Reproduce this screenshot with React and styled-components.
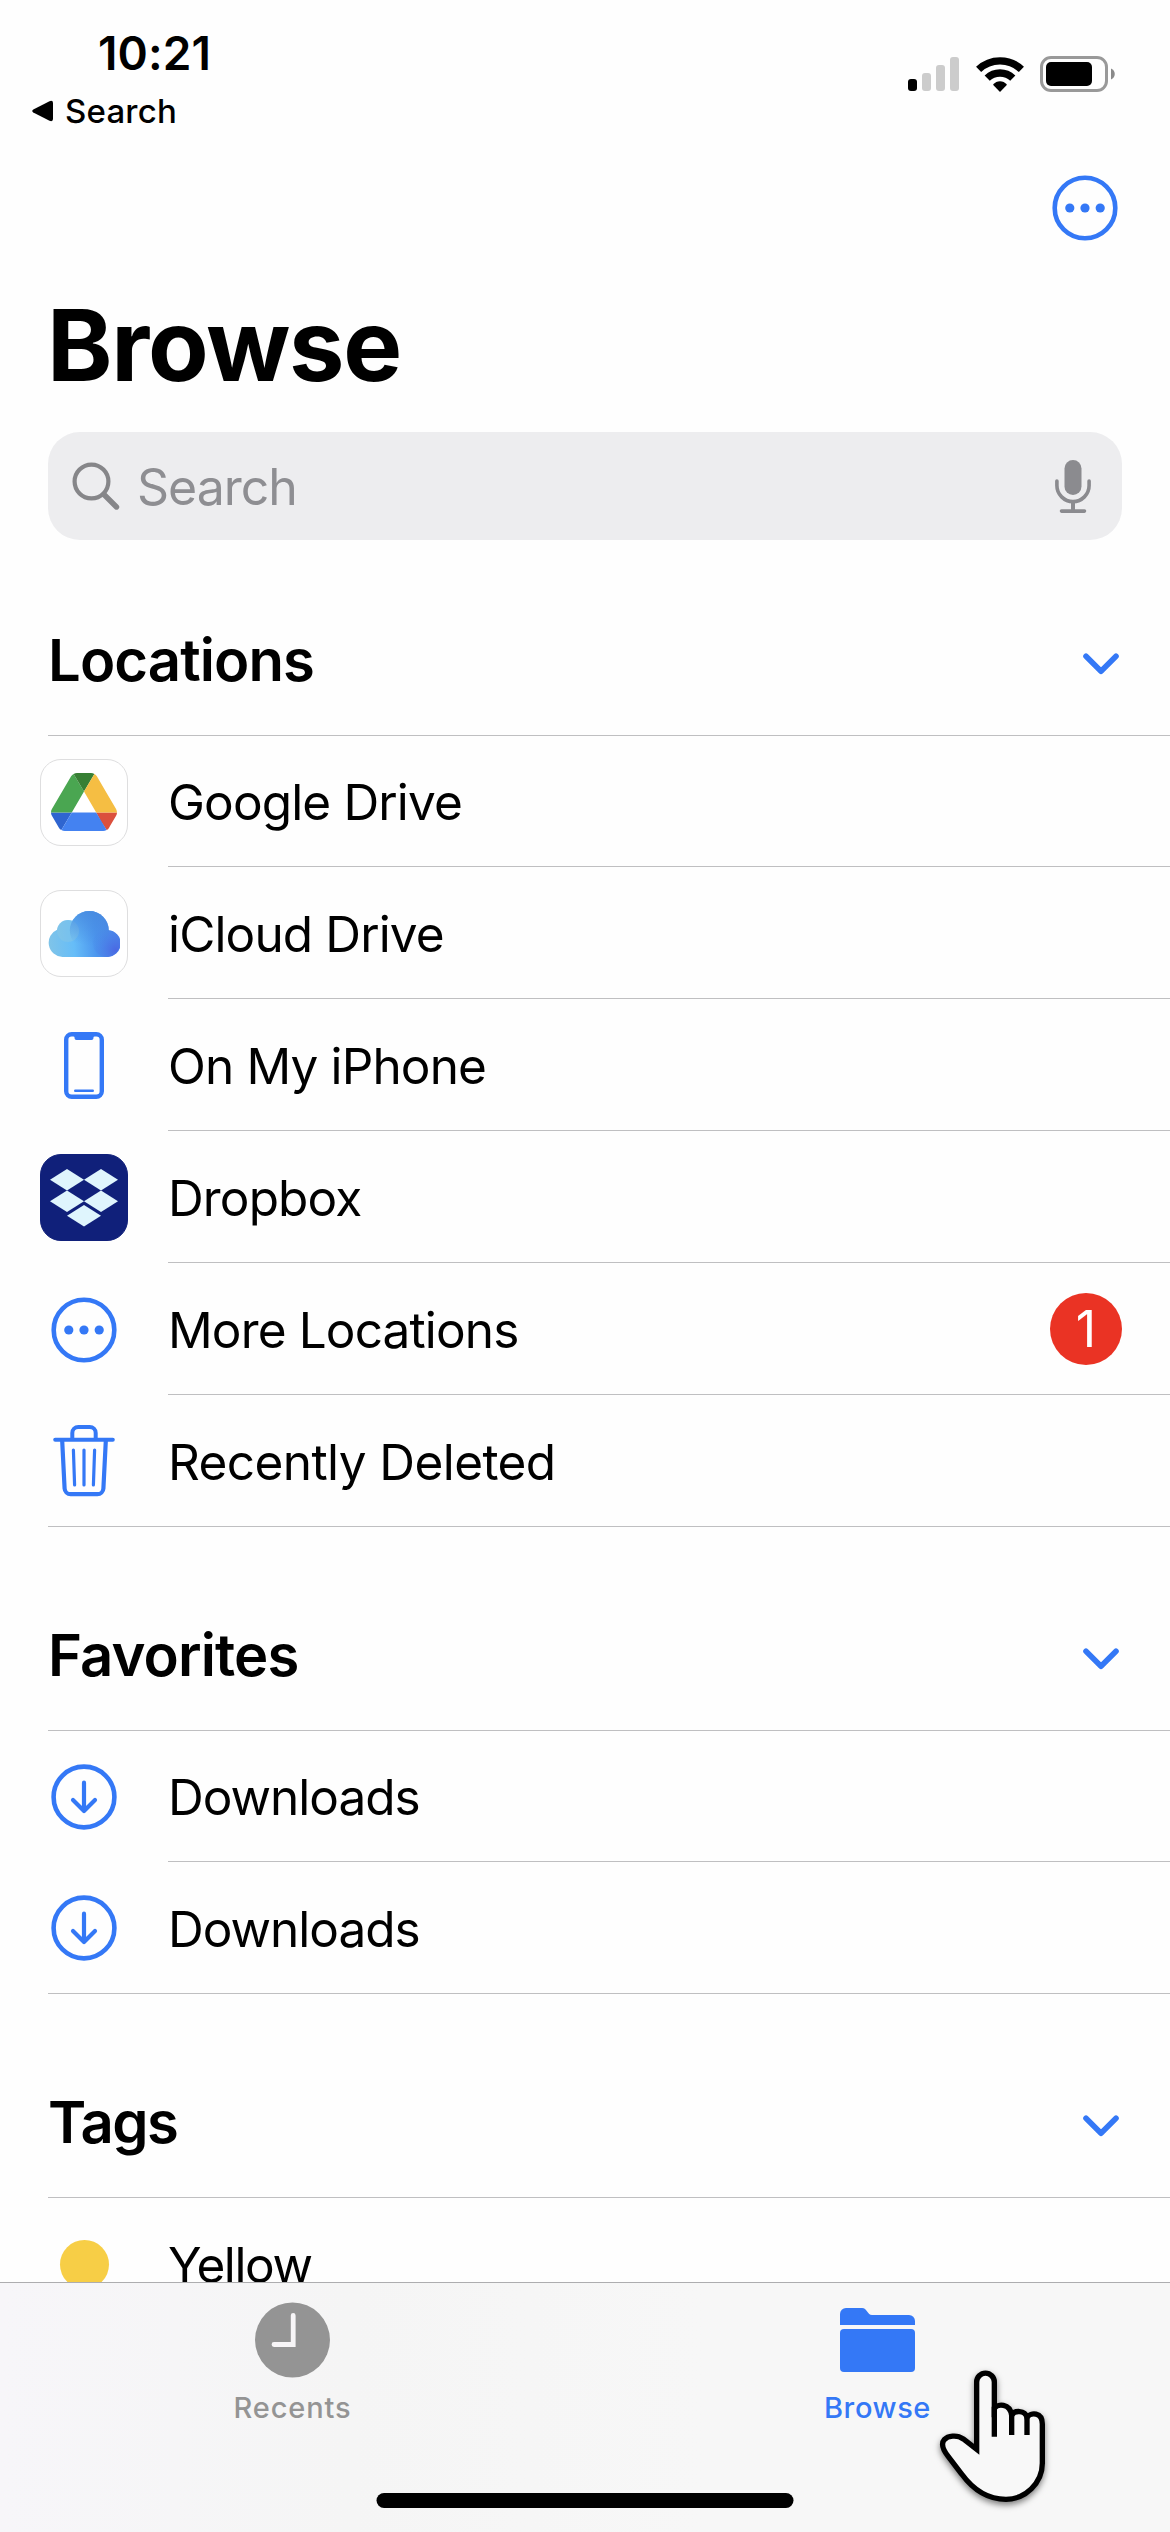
import React from "react";
import styled, { createGlobalStyle } from "styled-components";

const BLUE = "#3478f6";
const LINE = "#bfbfc1";

const GlobalStyle = createGlobalStyle`
	*, *::before, *::after {
		box-sizing: border-box;
	}
	body {
		margin: 0;
		background: #fff;
		color: #000;
		font-family: Inter, "Liberation Sans", sans-serif;
	}
	h1, h2, p, ul {
		margin: 0;
		padding: 0;
	}
	svg {
		display: block;
		flex-shrink: 0;
	}
`;

/* icons */

const SignalIcon = () => (
	<svg width="52" height="36" viewBox="0 0 52 36">
		<rect x="0" y="23" width="9" height="12" rx="3" fill="#000" />
		<rect x="14" y="17" width="9" height="18" rx="3" fill="#ccc" />
		<rect x="28" y="9" width="9" height="26" rx="3" fill="#ccc" />
		<rect x="42" y="1" width="9" height="34" rx="3" fill="#ccc" />
	</svg>
);

const WifiIcon = () => (
	<svg width="48" height="36" viewBox="0 0 48 36">
		<g fill="none" stroke="#000" strokeWidth="7.4">
			<path d="M2.6 13.4a31 31 0 0 1 42.8 0" />
			<path d="M11.2 22.2a18.4 18.4 0 0 1 25.6 0" />
		</g>
		<path d="M24 36l-7-7.2c3.9-4.6 10.1-4.6 14 0z" />
	</svg>
);

const BatteryIcon = () => (
	<svg width="75" height="36" viewBox="0 0 75 36">
		<rect x="1.5" y="1.5" width="65" height="33" rx="9.5" fill="none" stroke="#999" strokeWidth="3" />
		<rect x="6" y="6" width="46" height="24" rx="5" />
		<path d="M71 12.5c5 2 5 9 0 11z" fill="#8a8a8a" />
	</svg>
);

const MoreIcon = () => (
	<svg width="66" height="66" viewBox="0 0 66 66">
		<circle cx="33" cy="33" r="30.3" fill="none" stroke={BLUE} strokeWidth="4.6" />
		<g fill={BLUE}>
			<circle cx="17.8" cy="33" r="4.6" />
			<circle cx="33" cy="33" r="4.6" />
			<circle cx="48.2" cy="33" r="4.6" />
		</g>
	</svg>
);

const SearchIcon = () => (
	<svg width="48" height="48" viewBox="0 0 48 48" fill="none" stroke="#868689">
		<circle cx="19.5" cy="19.5" r="16.9" strokeWidth="4.2" />
		<path d="M32 32.5L44.5 45" strokeWidth="5.4" strokeLinecap="round" />
	</svg>
);

const MicIcon = () => (
	<svg width="36" height="53" viewBox="0 0 36 53" fill="none" stroke="#8b8b8f" strokeWidth="3.6">
		<rect x="9.5" y="0" width="17" height="35" rx="8.5" fill="#8b8b8f" stroke="none" />
		<path d="M1.9 21v4.5a16.1 16.1 0 0 0 32.2 0V21M6.5 51.1h23" strokeLinecap="round" />
		<path d="M18 42v9" strokeWidth="4" />
	</svg>
);

const ChevronIcon = () => (
	<svg width="36" height="22" viewBox="0 0 36 22">
		<path d="M3 3.2l15 15 15-15" fill="none" stroke={BLUE} strokeWidth="5.6" strokeLinecap="round" strokeLinejoin="round" />
	</svg>
);

const GoogleDriveIcon = () => (
	<svg width="66" height="58" viewBox="0 0 87.3 78" preserveAspectRatio="none">
		<path fill="#2f65d0" d="m6.6 66.85 3.85 6.65c.8 1.4 1.95 2.5 3.3 3.3l13.75-23.8h-27.5c0 1.55.4 3.1 1.2 4.5z" />
		<path fill="#4aa651" d="m43.65 25-13.75-23.8c-1.35.8-2.5 1.9-3.3 3.3l-25.4 44a9.06 9.06 0 0 0-1.2 4.5h27.5z" />
		<path fill="#db503d" d="m73.55 76.8c1.35-.8 2.5-1.9 3.3-3.3l1.6-2.75 7.65-13.25c.8-1.4 1.2-2.95 1.2-4.5h-27.5l5.85 11.5z" />
		<path fill="#377f34" d="m43.65 25 13.75-23.8c-1.35-.8-2.9-1.2-4.5-1.2h-18.5c-1.6 0-3.15.45-4.5 1.2z" />
		<path fill="#4482f1" d="m59.8 53h-32.3l-13.75 23.8c1.35.8 2.9 1.2 4.5 1.2h50.8c1.6 0 3.15-.45 4.5-1.2z" />
		<path fill="#f5be43" d="m73.4 26.5-12.7-22c-.8-1.4-1.95-2.5-3.3-3.3l-13.75 23.8 16.15 28h27.45c0-1.55-.4-3.1-1.2-4.5z" />
	</svg>
);

const ICloudIcon = () => (
	<svg width="72" height="46" viewBox="0 0 72 46">
		<defs>
			<linearGradient id="cloud" gradientUnits="userSpaceOnUse" x1="0" y1="30" x2="70" y2="24">
				<stop offset="0" stopColor="#80c4e8" />
				<stop offset="0.36" stopColor="#66bdf8" />
				<stop offset="0.68" stopColor="#4b95ee" />
				<stop offset="1" stopColor="#4a80e8" />
			</linearGradient>
			<linearGradient id="cloudShade" gradientUnits="userSpaceOnUse" x1="44" y1="0" x2="38" y2="34">
				<stop offset="0" stopColor="#488be0" stopOpacity="0.9" />
				<stop offset="1" stopColor="#488be0" stopOpacity="0" />
			</linearGradient>
			<radialGradient id="cloudEnd" cx="0.85" cy="0.75" r="0.85">
				<stop offset="0" stopColor="#4a68e3" />
				<stop offset="1" stopColor="#4a88e8" stopOpacity="0.2" />
			</radialGradient>
		</defs>
		<g fill="url(#cloud)">
			<circle cx="20" cy="20" r="11" />
			<circle cx="41.300" cy="19.500" r="19.500" />
			<path d="M14.500 46a14.300 14.300 0 0 1-5-27.500L60 19a13.500 13.500 0 0 1-1.500 27z" />
		</g>
		<circle cx="20" cy="20" r="11" fill="#8fc8e0" opacity="0.4" />
		<circle cx="41.300" cy="19.500" r="19.500" fill="url(#cloudShade)" />
		<circle cx="58.500" cy="32.500" r="13.500" fill="url(#cloudEnd)" />
	</svg>
);

const DropboxIcon = () => (
	<svg width="68" height="58" viewBox="0 0 68 58" fill="#dff5fd">
		<path d="M17 0l17 10.700-17 10.700L0 10.700z" />
		<path d="M51 0l17 10.700-17 10.700L34 10.700z" />
		<path d="M17 21.600l17 10.700-17 10.700L0 32.300z" />
		<path d="M51 21.600l17 10.700-17 10.700L34 32.300z" />
		<path d="M34 36l17 10.700-17 10.700L17 46.700z" />
	</svg>
);

const PhoneIcon = () => (
	<svg width="40" height="67" viewBox="0 0 40 67">
		<rect x="2.200" y="2.200" width="35.600" height="62.600" rx="5.500" fill="none" stroke={BLUE} strokeWidth="4.400" />
		<path d="M8.500 3h23l-2 2v1a2 2 0 0 1-2 2h-15a2 2 0 0 1-2-2V5z" fill={BLUE} />
		<path d="M11.300 58.800h17.400" stroke={BLUE} strokeWidth="2.600" strokeLinecap="round" />
	</svg>
);

const TrashIcon = () => (
	<svg width="62" height="72" viewBox="0 0 62 72" fill="none" stroke={BLUE} strokeLinecap="round" strokeLinejoin="round">
		<path d="M19.300 14V8a6 6 0 0 1 6-6h11.400a6 6 0 0 1 6 6v6" strokeWidth="4" />
		<path d="M2.200 14.700h57.600" strokeWidth="4" />
		<path d="M9.200 16l2.400 47.500a6 6 0 0 0 6 5.700h26.800a6 6 0 0 0 6-5.700L52.800 16" strokeWidth="4.200" />
		<path d="M20.400 25l1.200 35M31 25v35M41.600 25l-1.200 35" strokeWidth="3.200" />
	</svg>
);

const DownloadIcon = () => (
	<svg width="66" height="66" viewBox="0 0 66 66" fill="none" stroke={BLUE} strokeWidth="4.600">
		<circle cx="33" cy="33" r="30.400" />
		<path d="M33 18.700v28M22 36l11 11 11-11" strokeWidth="4.200" strokeLinecap="round" strokeLinejoin="round" />
	</svg>
);

const RecentsIcon = () => (
	<svg width="75" height="76" viewBox="0 0 75 76">
		<circle cx="37.500" cy="38" r="37.500" fill="#949494" />
		<path d="M38.200 13.500V42.500H19" fill="none" stroke="#f7f5f7" strokeWidth="4.800" strokeLinecap="round" />
	</svg>
);

const FolderIcon = () => (
	<svg width="75" height="76" viewBox="0 0 75 76" fill={BLUE}>
		<path d="M0 23v-11a6 6 0 0 1 6-6h16c5 0 5.500 7 10 7h37a6 6 0 0 1 6 6v4z" />
		<rect x="0" y="27" width="75" height="43" rx="4" />
	</svg>
);

const HandCursor = () => (
	<svg width="114" height="146" viewBox="468 318 342 438">
		<path
			d="M590 568V366A26.500 26.500 0 0 1 643 366V445C652 431 690 428 695 466C703 450 735 450 741 472C752 456 787 456 787 492V610C787 670 735 718 678 718C625 718 580 690 545 642L505 590C488 568 483 550 493 539C503 528 530 523 550 537Z"
			fill="#f8f8f8"
			stroke="#000"
			strokeWidth="16"
		/>
		<path d="M643 440V530M695 460V525M741 465V525" stroke="#000" strokeWidth="16" />
	</svg>
);

/* data */

const locations = [
	{ name: "Google Drive", icon: <GoogleDriveIcon />, tile: "#fff" },
	{ name: "iCloud Drive", icon: <ICloudIcon />, tile: "#fff" },
	{ name: "On My iPhone", icon: <PhoneIcon /> },
	{ name: "Dropbox", icon: <DropboxIcon />, tile: "#10207a" },
	{ name: "More Locations", icon: <MoreIcon />, badge: 1 },
	{ name: "Recently Deleted", icon: <TrashIcon />, spacing: "-0.58px" },
];

const favorites = [
	{ name: "Downloads", icon: <DownloadIcon />, spacing: "-1px" },
	{ name: "Downloads", icon: <DownloadIcon />, spacing: "-1px" },
];

const Section = ({ title, items, first, spacing }) => {
	return (
		<section>
			<SectionHeader $first={first} $spacing={spacing}>
				<h2>{title}</h2>
				<ChevronIcon />
			</SectionHeader>
			<List>
				{items.map(({ name, icon, tile, badge, spacing }, index) => (
					<Row key={index}>
						<IconSlot>{tile ? <Tile $color={tile}>{icon}</Tile> : icon}</IconSlot>
						<RowBody>
							<RowName $spacing={spacing}>{name}</RowName>
							{badge && <Badge>{badge}</Badge>}
						</RowBody>
					</Row>
				))}
			</List>
		</section>
	);
};

const App = () => {
	return (
		<Screen>
			<GlobalStyle />
			<StatusBar>
				<div>
					<Time>10:21</Time>
					<BackLink>
						<svg width="21" height="22" viewBox="0 0 21 22">
							<path d="M1.300 9.500L17.500 1.200Q21 0 21 3v16q0 3-3.500 1.800L1.300 12.500Q-.8 11 1.300 9.500z" />
						</svg>
						Search
					</BackLink>
				</div>
				<StatusIcons>
					<SignalIcon />
					<WifiIcon />
					<BatteryIcon />
				</StatusIcons>
			</StatusBar>
			<NavBar>
				<MoreIcon />
			</NavBar>
			<Title>Browse</Title>
			<SearchBar>
				<SearchIcon />
				<span>Search</span>
				<MicIcon />
			</SearchBar>
			<Content>
				<Section title="Locations" items={locations} first />
				<Section title="Favorites" items={favorites} />
				<Section
					title="Tags"
					items={[{ name: "Yellow", icon: <TagDot />, spacing: "-1.4px" }]}
					spacing="-1.5px"
				/>
			</Content>
			<TabBar>
				<Tab $color="#949494">
					<RecentsIcon />
					<TabLabel $spacing="0.9px">Recents</TabLabel>
				</Tab>
				<Tab $color={BLUE}>
					<FolderIcon />
					<TabLabel $spacing="0.6px">Browse</TabLabel>
				</Tab>
				<HomeIndicator />
			</TabBar>
			<Pointer>
				<HandCursor />
			</Pointer>
		</Screen>
	);
};

const Screen = styled.main`
	position: relative;
	display: flex;
	flex-direction: column;
	width: 1170px;
	height: 2532px;
	overflow: hidden;
	background: #fefefe;
`;

const StatusBar = styled.header`
	display: flex;
	justify-content: space-between;
	height: 150px;
	padding: 26px 55px 0 32px;
`;

const Time = styled.p`
	padding-left: 66px;
	font-size: 46px;
	font-weight: 600;
	line-height: 55px;
	letter-spacing: 0.1px;
`;

const BackLink = styled.div`
	display: flex;
	align-items: center;
	gap: 12px;
	margin-top: 10px;
	font-size: 33px;
	font-weight: 500;
	line-height: 40px;
	letter-spacing: 0.2px;
`;

const StatusIcons = styled.div`
	display: flex;
	gap: 16px;
	padding-top: 30px;
`;

const NavBar = styled.nav`
	display: flex;
	align-items: center;
	justify-content: flex-end;
	height: 115px;
	padding-right: 52px;
`;

const Title = styled.h1`
	margin: 20px 0 27px 47px;
	font-size: 99px;
	font-weight: 700;
	line-height: 120px;
	letter-spacing: -1.2px;
`;

const SearchBar = styled.div`
	display: flex;
	align-items: center;
	flex-shrink: 0;
	height: 108px;
	margin: 0 48px;
	padding: 0 31px 0 24px;
	border-radius: 32px;
	background: #ededef;
	color: #8e8e92;
	font-size: 50px;
	span {
		flex: 1;
		padding: 2px 0 0 17px;
		letter-spacing: -1px;
	}
`;

const Content = styled.div`
	flex: 1;
	min-height: 0;
	overflow: hidden;
`;

const SectionHeader = styled.div`
	display: flex;
	align-items: flex-end;
	justify-content: space-between;
	height: ${({ $first }) => ($first ? 195 : 203)}px;
	padding: 0 51px 40px 48px;
	h2 {
		font-size: 58px;
		font-weight: 600;
		line-height: 70px;
		letter-spacing: ${({ $spacing }) => $spacing || "-0.9px"};
	}
	svg {
		margin-bottom: 20px;
	}
`;

const List = styled.ul`
	margin-left: 48px;
	border: solid ${LINE};
	border-width: 1px 0;
	list-style: none;
`;

const RowBody = styled.div`
	display: flex;
	flex: 1;
	align-items: center;
	justify-content: space-between;
	padding: 2px 48px 0 0;
	border-bottom: 1px solid ${LINE};
`;

const Row = styled.li`
	display: flex;
	gap: 40px;
	height: 132px;
	margin-left: -8px;
	&:first-child,
	&:last-child {
		height: 131px;
	}
	&:last-child ${RowBody} {
		border-bottom: none;
	}
`;

const IconSlot = styled.div`
	display: flex;
	align-items: center;
	justify-content: center;
	width: 88px;
	padding-top: 1px;
`;

const Tile = styled.div`
	display: flex;
	align-items: center;
	justify-content: center;
	width: 88px;
	height: 87px;
	border: 1px solid ${({ $color }) => ($color === "#fff" ? "#dededf" : $color)};
	border-radius: 21px;
	background: ${({ $color }) => $color};
`;

const RowName = styled.span`
	font-size: 49.5px;
	letter-spacing: ${({ $spacing }) => $spacing || "-0.86px"};
`;

const Badge = styled.span`
	display: flex;
	align-items: center;
	justify-content: center;
	width: 72px;
	height: 72px;
	margin-top: -2px;
	border-radius: 50%;
	background: #ea3324;
	color: #fff;
	font-size: 50px;
`;

const TagDot = styled.span`
	width: 49px;
	height: 49px;
	border-radius: 50%;
	background: #f7ce46;
`;

const TabBar = styled.nav`
	position: relative;
	display: flex;
	flex-shrink: 0;
	height: 250px;
	border-top: 1px solid #adadaf;
	background: linear-gradient(90deg, #f7f6f9, #f5f5f5 30%, #f7f7f7 60%);
`;

const Tab = styled.div`
	display: flex;
	flex: 1;
	flex-direction: column;
	align-items: center;
	padding-top: 19px;
	color: ${({ $color }) => $color};
`;

const TabLabel = styled.span`
	margin-top: 12px;
	font-size: 29px;
	font-weight: 500;
	line-height: 36px;
	letter-spacing: ${({ $spacing }) => $spacing};
`;

const HomeIndicator = styled.div`
	position: absolute;
	bottom: 24px;
	left: 50%;
	width: 417px;
	height: 15px;
	border-radius: 8px;
	background: #000;
	transform: translateX(-50%);
`;

const Pointer = styled.div`
	position: absolute;
	top: 2366px;
	left: 936px;
	filter: drop-shadow(0 3px 3px rgba(0, 0, 0, 0.5));
`;

export default App;
